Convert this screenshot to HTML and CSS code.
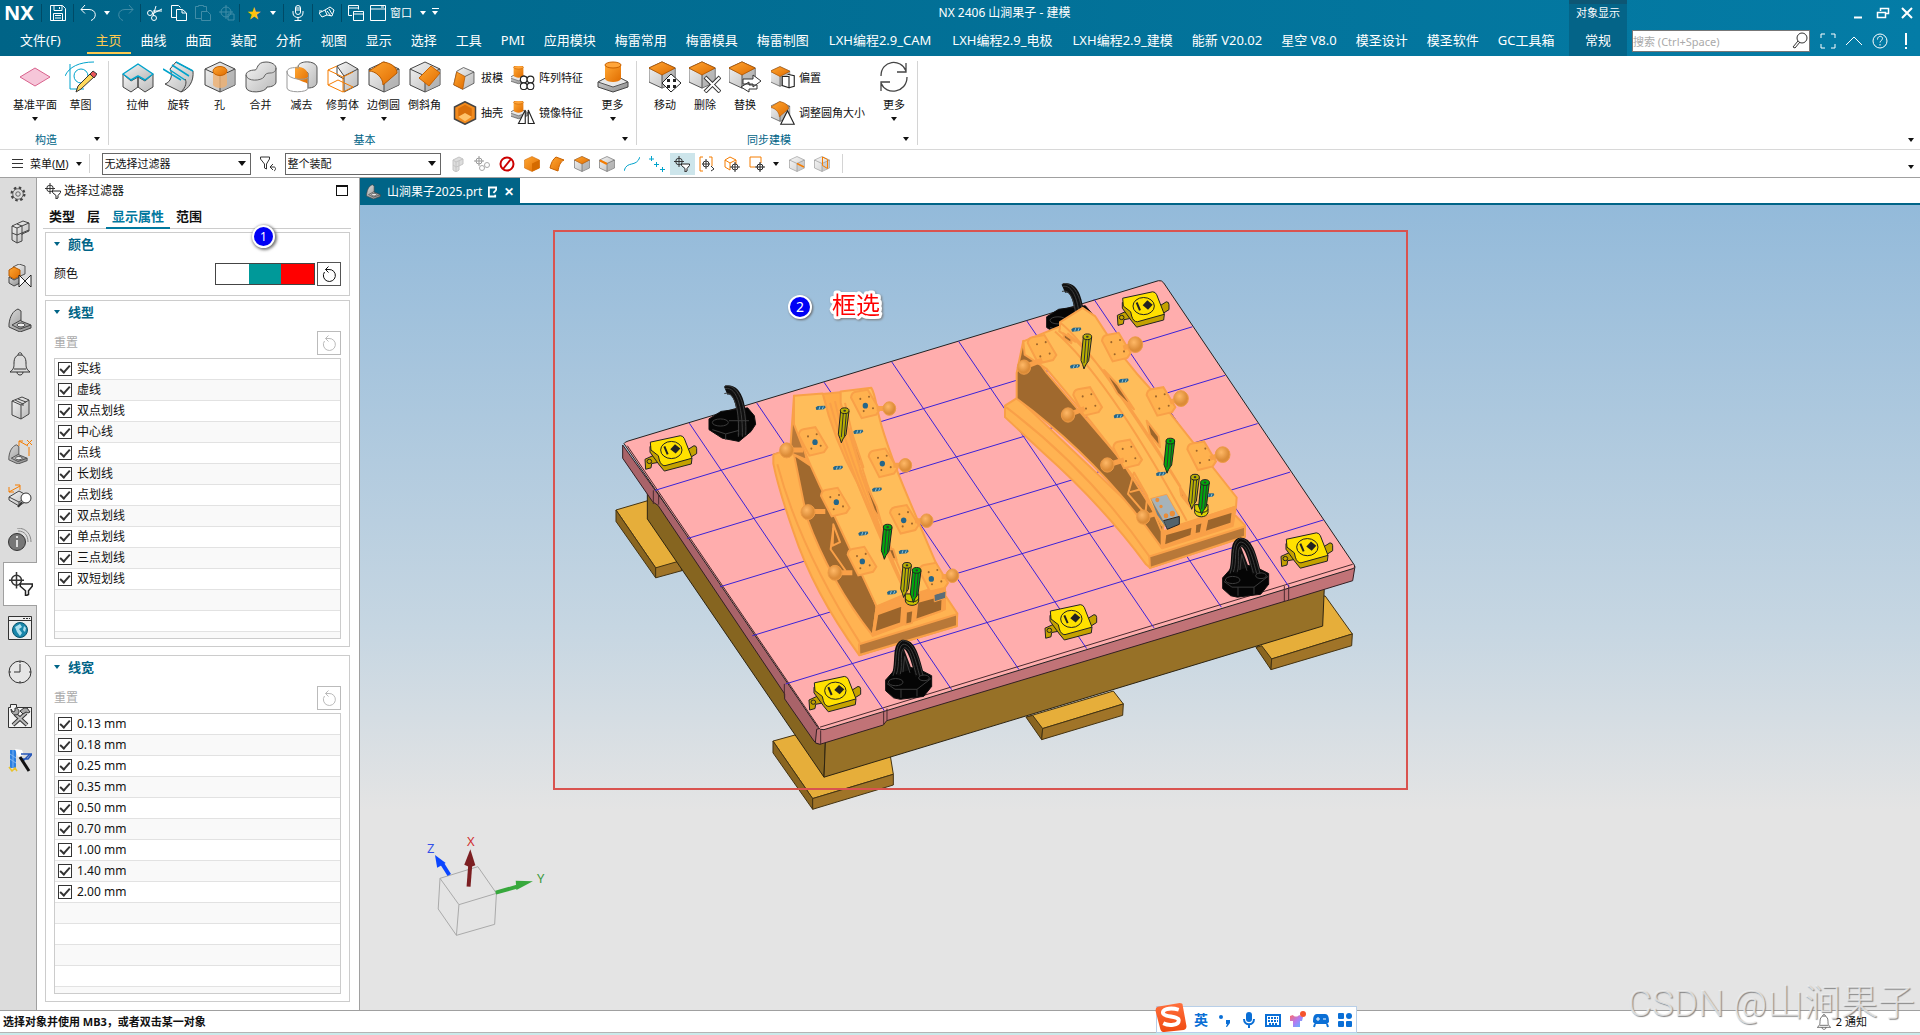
FILE: index.html
```html
<!DOCTYPE html>
<html lang="zh-CN">
<head>
<meta charset="utf-8">
<title>NX 2406 山涧果子 - 建模</title>
<link rel="stylesheet" href="styles.css">
</head>
<body>
<svg class="sprite" aria-hidden="true">
  <defs>
    <linearGradient id="gr" x1="0" y1="0" x2="1" y2="1"><stop offset="0" stop-color="#f4f4f4"/><stop offset="1" stop-color="#b9b9b9"/></linearGradient>
    <linearGradient id="gd" x1="0" y1="0" x2="1" y2="1"><stop offset="0" stop-color="#d8d8d8"/><stop offset="1" stop-color="#8b8b8b"/></linearGradient>
    <linearGradient id="or" x1="0" y1="0" x2="1" y2="1"><stop offset="0" stop-color="#ffa733"/><stop offset="1" stop-color="#e06c00"/></linearGradient>
    <radialGradient id="ball" cx=".4" cy=".35"><stop offset="0" stop-color="#ffb866"/><stop offset="1" stop-color="#dc8c38"/></radialGradient>
    <linearGradient id="shirt" x1="0" y1="0" x2="1" y2="1"><stop offset="0" stop-color="#ff6a6a"/><stop offset=".5" stop-color="#b07cf5"/><stop offset="1" stop-color="#4ac3ff"/></linearGradient>
    <linearGradient id="sogou" x1="0" y1="0" x2="0" y2="1"><stop offset="0" stop-color="#ff6f3c"/><stop offset="1" stop-color="#f04a10"/></linearGradient>
  </defs>

  <symbol id="save" viewBox="0 0 16 16"><path d="M.5.5h12l3 3v12H.5zM4 .5v5h8v-5M9.500 2v2M3.500 15.500v-7h9v7M5 10.500h6M5 13h6"/></symbol>
  <symbol id="undo" viewBox="0 0 16 16"><path d="M5 0L1 4.500l4 4M1 4.500h8c8 0 8 9 2 11"/></symbol>
  <symbol id="redo" viewBox="0 0 16 16"><path d="M11 0l4 4.500-4 4M15 4.500H7c-8 0-8 9-2 11"/></symbol>
  <symbol id="cut" viewBox="0 0 16 16"><path d="M15 4L5 9M9 1L6 11M15 6L6 6"/><circle cx="3" cy="8" r="2.500"/><circle cx="7" cy="13" r="2.500"/></symbol>
  <symbol id="copy" viewBox="0 0 16 16"><path d="M5 12.500H.5V.5h7l2 2M5.500 4.500h6l4 3.500v7.500h-10zM11 4.500V8h4"/></symbol>
  <symbol id="paste" viewBox="0 0 16 16"><path d="M6 13.500H.5v-12h3v-1h5v1h3V6M6.500 6.500h6l3 3v6h-9z"/></symbol>
  <symbol id="aim" viewBox="0 0 16 16"><circle cx="7" cy="7" r="5"/><path d="M7 0v14M0 7h14M9 9h6v6H9z"/></symbol>
  <symbol id="mic" viewBox="0 0 16 16"><rect x="5.500" y=".5" width="5" height="9" rx="2.500"/><path d="M3 6v2c0 6 10 6 10 0V6M8 12.500v3M4.500 15.500h7M6 3h4M6 5h4"/></symbol>
  <symbol id="hand" viewBox="0 0 16 16"><path d="M0 8l6-3 2 5-5 2zM6 5l5-3 4 3-2 6-5-1M8 6l4 5M10 4l3 5M0 6h3"/></symbol>
  <symbol id="wins" viewBox="0 0 16 16"><path d="M4 10.500H.5V.5h10v4M.5 3h10M5.500 6.500h10v9h-10zM5.500 9h10"/></symbol>
  <symbol id="win" viewBox="0 0 16 16"><path d="M.5.500h15v15H.5zM.5 4h15M11 2h3"/></symbol>

  <symbol id="plane" viewBox="0 0 32 32"><path d="M16 7l15 9-15 9L1 16z" fill="#f6c6d9" stroke="#d8638d"/></symbol>
  <symbol id="sketch" viewBox="0 0 32 32"><g fill="none" stroke="#00a3cc"><path d="M5 3v25h14M0 15C4 6 14 1 29 1"/><circle cx="16" cy="15" r="7"/></g><path d="M11 31l2-6 13-13 4 3-14 13z" fill="#ffd95c" stroke="#333"/><path d="M25 13l3-3 4 3-3 4z" fill="#e8565a" stroke="#333"/></symbol>
  <symbol id="extrude" viewBox="0 0 32 32"><g fill="url(#gr)" stroke="#444" stroke-linejoin="round"><path d="M1 13v13l8 5 7-5V16L9 20zM31 13v13l-8 5-7-5V16l7 4z"/><path d="M16 3L1 13l8 6 7-4 7 4 8-6z" stroke="#00a3cc" stroke-width="1.500"/></g></symbol>
  <symbol id="revolve" viewBox="0 0 32 32"><path d="M13 1l17 9c1 10-4 18-12 21L2 23c6-2 8-9 5-15z" fill="url(#gr)" stroke="#444"/><path d="M0 8l18 11M7 9l15 10M9 4l17 11M13 1l17 9" fill="none" stroke="#00a3cc" stroke-width="1.500"/><path d="M18 31c5-5 6-10 4-13" fill="none" stroke="#444"/></symbol>
  <symbol id="box" viewBox="0 0 32 32"><path d="M16 1L1 8v16l15 7 15-7V8z" fill="url(#gr)" stroke="#444" stroke-linejoin="round"/><path d="M31 8v16l-15 7V15z" fill="#aaa" opacity=".6"/><path d="M1 8l15 7 15-7M16 15v16" fill="none" stroke="#444"/></symbol>
  <symbol id="obox" viewBox="0 0 32 32"><use href="#box"/><path d="M16 1L1 8l15 8 15-8z" fill="url(#or)" stroke="#b85a00"/></symbol>
  <symbol id="hole" viewBox="0 0 32 32"><use href="#box"/><path d="M9 11v13c2 4 12 4 14 0V11" fill="#efb071" opacity=".8"/><ellipse cx="16" cy="10" rx="7" ry="4.500" fill="url(#or)" stroke="#c96200"/></symbol>
  <symbol id="unite" viewBox="0 0 32 32"><path d="M1 14c0-3 4-5 9-5 3 0 1-8 11-8 6 0 10 3 10 6v14c0 3-4 5-9 5-1 6-21 7-21 0z" fill="url(#gr)" stroke="#555"/><path d="M1 14c1 7 15 6 18 2 1-3 3-4 6-4 4 0 6-2 6-5" fill="none" stroke="#666"/></symbol>
  <symbol id="subtract" viewBox="0 0 32 32"><path d="M12 6c0-7 19-7 19 1v14c0 4-4 6-9 6V12z" fill="url(#gr)" stroke="#555"/><path d="M9 6c7-1 14 3 13 10v8c0-3-7-3-13-7z" fill="url(#or)"/><path d="M1 10v17c0 5 21 5 21 0V16c-1 4-21 3-21-5 0-4 6-5 12-4" fill="none" stroke="#999"/></symbol>
  <symbol id="trim" viewBox="0 0 32 32"><path d="M10 5l9-4 12 7v16l-14 7V15z" fill="url(#gr)" stroke="#444"/><path d="M10 5v9l7 4M17 15l14-7" fill="none" stroke="#444"/><path d="M1 9l15 7v15L1 24zM1 9l9-4M16 16l10-5M16 31l10-5M1 24l10-5 15 7" fill="none" stroke="#f57c00"/></symbol>
  <symbol id="blend" viewBox="0 0 32 32"><use href="#box"/><path d="M1 10L15 1c8 1 14 5 14 11l-14 12c0-8-8-14-14-14z" fill="url(#or)" stroke="#b85a00"/></symbol>
  <symbol id="chamfer" viewBox="0 0 32 32"><use href="#box"/><path d="M22 5l9 7-11 13-10-8z" fill="url(#or)" stroke="#c96200"/></symbol>
  <symbol id="draft" viewBox="0 0 32 32"><path d="M14 2l14 6v15l-15 8L1 25 5 7z" fill="url(#gr)" stroke="#444"/><path d="M5 8l11 6-3 17L1 25z" fill="url(#or)" stroke="#b85a00"/><path d="M16 14l12-6" stroke="#444"/></symbol>
  <symbol id="shell" viewBox="0 0 32 32"><path d="M16 1L2 8v16l14 7 14-7V8z" fill="#f28a1d" stroke="#444" stroke-width="2"/><path d="M7 10l9-5 9 5v11l-9 5-9-5z" fill="#d96f0a"/><path d="M7 21l9-5 9 5-9 6z" fill="#ffc36a"/></symbol>
  <symbol id="boss" viewBox="0 0 32 32"><path d="M16 14L1 21v5l15 5 15-5v-5z" fill="url(#gd)" stroke="#444"/><path d="M1 21l15 5 15-5-15-8z" fill="#e8e8e8" stroke="#555"/><path d="M8 4v14c2 4 14 4 16 0V4" fill="url(#or)"/><ellipse cx="16" cy="4" rx="8" ry="3" fill="#ffa53a" stroke="#c96200"/></symbol>
  <symbol id="pattern" viewBox="0 0 32 32"><use href="#boss" x="-3" y="-2" width="26" height="27"/><g fill="#fff" stroke="#222" stroke-width="1.500"><circle cx="17" cy="18" r="4.500"/><circle cx="26" cy="18" r="4.500"/><circle cx="17" cy="27" r="4.500"/><circle cx="26" cy="27" r="4.500"/></g></symbol>
  <symbol id="mirror" viewBox="0 0 32 32"><use href="#boss" x="-3" y="-2" width="26" height="27"/><path d="M19 12v18h-9zM23 12v18h8z" fill="#fff" stroke="#222" stroke-width="1.500"/></symbol>
  <symbol id="move" viewBox="0 0 32 32"><use href="#obox" x="-1" y="0" width="28" height="28"/><path d="M22 13l10 9-10 9-9-9z" fill="#fff" stroke="#222"/><path d="M18 18h3v3h-3zM24 18h3v3h-3zM18 24h3v3h-3zM24 24h3v3h-3z" fill="#222"/></symbol>
  <symbol id="delete" viewBox="0 0 32 32"><use href="#obox" x="-1" y="0" width="28" height="28"/><path d="M16 16l15 15M31 16L16 31" stroke="#333" stroke-width="4"/><path d="M16.500 16.500l14 14M30.500 16.500l-14 14" stroke="#fff" stroke-width="2"/></symbol>
  <symbol id="replace" viewBox="0 0 32 32"><use href="#obox" x="-1" y="0" width="28" height="28"/><path d="M14 18h10v-4l8 6-8 6v-3H14zM28 24h-8v-3l-8 5 8 5v-3h8z" fill="#fff" stroke="#333"/></symbol>
  <symbol id="offset" viewBox="0 0 32 32"><use href="#obox" x="-2" y="0" width="28" height="28"/><path d="M15 14h9v15l-9-3zM22 11l9 2v14l-7 2" fill="#fff" stroke="#222" stroke-width="1.500"/></symbol>
  <symbol id="resize" viewBox="0 0 32 32"><use href="#blend" x="-2" y="0" width="28" height="28"/><path d="M22 13l9 18H13z" fill="#fff" stroke="#222" stroke-width="1.500"/></symbol>
  <symbol id="cycle" viewBox="0 0 32 32"><path d="M3 15C3-1 23-3 28 10M28 2v9h-9M29 16c0 16-21 19-26 6M3 30v-9h9" fill="none" stroke="#444" stroke-width="1.300"/></symbol>

  <symbol id="funnel" viewBox="0 0 16 16"><path d="M.5 1h9v2L6.500 8v5l-2-1V8l-4-5zM13 8l-3 3 3 3M10 11h4c2 0 2 3 0 4" fill="none" stroke="#333"/></symbol>
  <symbol id="bars" viewBox="0 0 16 16"><path d="M4 4l6-3 4 2v5l-4 2v4l-3 2-3-2z" fill="#ddd" stroke="#c4c4c4"/><path d="M4 4l3 2 7-3M7 6v10M4 9l3 2 3-1V5" fill="none" stroke="#c4c4c4"/></symbol>
  <symbol id="linkaim" viewBox="0 0 16 16"><path d="M5 0v10M0 5h10" stroke="#999"/><circle cx="5" cy="5" r="3" fill="none" stroke="#999"/><circle cx="8" cy="12" r="2.500" fill="none" stroke="#aaa"/><circle cx="13" cy="9" r="2.500" fill="none" stroke="#aaa"/></symbol>
  <symbol id="stop" viewBox="0 0 16 16"><circle cx="8" cy="8" r="6.500" fill="#fff" stroke="#cc0000" stroke-width="2"/><path d="M12 3L4 13" stroke="#cc0000" stroke-width="2"/></symbol>
  <symbol id="solid" viewBox="0 0 32 32"><path d="M16 1L1 8v16l15 7 15-7V8z" fill="url(#or)" stroke="#c96200"/><path d="M16 15v16l15-7V8z" fill="#d56b00"/></symbol>
  <symbol id="face" viewBox="0 0 16 16"><path d="M7 1l8 3c-4 2-5 6-6 11l-8-3C2 7 4 3 7 1z" fill="url(#or)" stroke="#c96200"/></symbol>
  <symbol id="edge" viewBox="0 0 32 32"><use href="#box"/><path d="M2 9l14 7" stroke="#f57c00" stroke-width="4"/></symbol>
  <symbol id="curve" viewBox="0 0 16 16"><path d="M0 15C3 4 12 12 16 1" fill="none" stroke="#00a3cc"/></symbol>
  <symbol id="points" viewBox="0 0 16 16"><path d="M0 3h5M2.500 0v5M5 8.500h5M7.500 6v5M11 13.500h5M13.500 11v5" stroke="#00a3cc"/></symbol>
  <symbol id="aimfilter" viewBox="0 0 16 16"><circle cx="5" cy="5.500" r="3.300" fill="none" stroke="#333"/><path d="M5 0v11M0 5.500h10" stroke="#333"/><path d="M7.500 8h8v1.500l-2.500 3V15l-2 1v-3.500l-3.500-3z" fill="#fff" stroke="#222"/></symbol>
  <symbol id="bracket" viewBox="0 0 16 16"><path d="M4 1H1v14h3M10 1h3v9" fill="none" stroke="#f57c00"/><circle cx="7" cy="8" r="3" fill="none" stroke="#333"/><path d="M7 3v10M3 8h8M12 10l3 3-3 2" stroke="#333" fill="none"/></symbol>
  <symbol id="boxaim" viewBox="0 0 16 16"><path d="M6 1L1 4v7l5 3M6 1l6 3v5M1 4l5 3 6-3M6 7v7" fill="none" stroke="#f57c00"/><circle cx="11" cy="11" r="3" fill="#fff" stroke="#333"/><path d="M11 6v10M6 11h10" stroke="#333"/></symbol>
  <symbol id="sqaim" viewBox="0 0 16 16"><path d="M6 11H1V1h11v6" fill="none" stroke="#f57c00"/><circle cx="11" cy="11" r="3" fill="#fff" stroke="#222"/><path d="M11 6v10M6 11h10" stroke="#222"/></symbol>
  <symbol id="cubeline" viewBox="0 0 32 32"><use href="#box" opacity=".7"/><path d="M16 15l14 7" stroke="#f57c00" stroke-width="3"/></symbol>
  <symbol id="cubecut" viewBox="0 0 32 32"><use href="#box" opacity=".7"/><path d="M17 2l10 5v18l-10-6z" fill="none" stroke="#f57c00" stroke-width="2"/></symbol>

  <symbol id="gear" viewBox="0 0 24 24"><circle cx="12" cy="12" r="8.500" fill="none" stroke="#444" stroke-width="3" stroke-dasharray="3.300 3.380"/><circle cx="12" cy="12" r="7" fill="#ddd" stroke="#444"/><circle cx="12" cy="12" r="3" fill="none" stroke="#444"/></symbol>
  <symbol id="asm" viewBox="0 0 24 24"><path d="M4 6l11-5 6 2v8l-7 3v7l-5 2-5-3z" fill="url(#gr)" stroke="#444"/><path d="M4 6l5 2 12-5M9 8v15M14 6v9M4 13l5 2 12-5M9 4l5 2" fill="none" stroke="#444"/></symbol>
  <symbol id="constraint" viewBox="0 0 24 24"><path d="M5 3l6-3 6 2v8l-7 3z" fill="url(#gr)" stroke="#555"/><path d="M1 6l5-3 6 3v6l-6 3-5-3z" fill="url(#or)" stroke="#b85a00"/><path d="M1 13l5 3 6-3v6l-6 3-5-3z" fill="url(#gd)" stroke="#444"/><path d="M11 11v12l12-12v12z" fill="#fff" stroke="#222"/></symbol>
  <symbol id="part" viewBox="0 0 24 24"><path d="M1 16C2 8 5 3 10 1l3 2v10l10 4v3l-11 4L1 19z" fill="url(#gd)" stroke="#444"/><path d="M13 12L4 17l8 4 11-4" fill="none" stroke="#444"/><ellipse cx="13" cy="17" rx="4" ry="2" fill="#eee" stroke="#444"/></symbol>
  <symbol id="bell" viewBox="0 0 24 24"><path d="M2 20c4-3 4-5 4-9 0-5 2-8 6-8s6 3 6 8c0 4 0 6 4 9zM10 3c0-3 4-3 4 0M9 20c0 4 6 4 6 0M6 17h12" fill="none" stroke="#333"/></symbol>
  <symbol id="books" viewBox="0 0 24 24"><path d="M4 5l10-4 7 3v14l-8 5-9-4z" fill="url(#gr)" stroke="#444"/><path d="M4 5l9 4v14M7 4l8 4v2M10 3l8 3M13 9l8-5" fill="none" stroke="#444"/></symbol>
  <symbol id="partx" viewBox="0 0 24 24"><use href="#part" y="4" width="20" height="20"/><path d="M11 1l9 5M11 1v5M11 1h4M19 0l5 5M24 0l-5 5M21 7v9" stroke="#f57c00" fill="none"/></symbol>
  <symbol id="inspect" viewBox="0 0 24 24"><path d="M1 13l10-6 9 5v4l-9 6-10-6z" fill="url(#gr)" stroke="#444"/><path d="M1 13l10 5 9-6M11 18v4" fill="none" stroke="#444"/><path d="M1 8l11-6M1 3v5h5M12 6V1H7" fill="none" stroke="#f57c00"/><circle cx="18" cy="14" r="5" fill="#fff" stroke="#333"/><path d="M14 18l-4 5" stroke="#333" stroke-width="2"/></symbol>
  <symbol id="info" viewBox="0 0 24 24"><circle cx="9" cy="14" r="8.500" fill="#777" stroke="#333"/><path d="M9 12v7M9 8v2" stroke="#fff" stroke-width="1.500"/><path d="M10 3c7 0 10 5 10 11M9 0c10 0 14 7 14 14" fill="none" stroke="#888"/></symbol>
  <symbol id="web" viewBox="0 0 24 24"><path d="M.5.500h23v23H.5zM.5 4.500h23" fill="#eee" stroke="#333"/><path d="M15 2.500h7" stroke="#333" stroke-dasharray="2 1"/><circle cx="12" cy="14" r="7.500" fill="#1a87ab" stroke="#06526b"/><path d="M7 11l5-3 2 3-3 2 3 4-2 3-3-4zM16 10l2 2-1 4-2-2z" fill="#aee0ee"/></symbol>
  <symbol id="clock" viewBox="0 0 24 24"><circle cx="12" cy="12" r="11" fill="#e6e6e6" stroke="#333"/><path d="M12 4v8H6M12 1v2M12 21v2M1 12h2M21 12h2" fill="none" stroke="#333"/></symbol>
  <symbol id="tools" viewBox="0 0 24 24"><path d="M.5 3.500h2v-3h6v3h15v20H.5z" fill="#f4f4f4" stroke="#333"/><path d="M5 21L18 9M7 10l12 11" stroke="#333" stroke-width="4"/><path d="M5 21L18 9M7 10l12 11" stroke="#bbb" stroke-width="2"/><path d="M12 7l4-3h3l3 4-2 1-2-1-3 2zM3 5l2 3 2-1V4c4 0 5 4 3 6s-7 1-7-5z" fill="#aaa" stroke="#333"/></symbol>
  <symbol id="wizard" viewBox="0 0 24 24"><path d="M2 2h6v18H2z" fill="#2a7fe0"/><path d="M5 2v18M2 6l6 4M2 11l6 4" stroke="#7fb6f2"/><path d="M7 1l7 1 2 5-6 2z" fill="#fff"/><path d="M13 6h11l-4 5h-6M14 14l8-8" stroke="#2455b8" stroke-width="1.500" fill="none"/><path d="M12 9l9 14" stroke="#111" stroke-width="3"/><path d="M1 19l3 4 3-3 2 3" stroke="#e8c22c" fill="none" stroke-width="1.500"/></symbol>
  <symbol id="reset" viewBox="0 0 16 16"><path d="M3.500 6A6 6 0 1 0 8 3.500H4.500M7.500 .5l-3 3 3 3" fill="none" stroke="currentColor"/></symbol>
</svg>

<header class="appbar">
  <div class="appbar-main">
    <div class="titlebar">
      <strong class="brand">NX</strong><i class="sep"></i>
      <button class="qa save" aria-label="保存"><svg><use href="#save"/></svg></button><i class="sep"></i>
      <button class="qa mid" aria-label="撤销"><svg><use href="#undo"/></svg></button>
      <button class="qa drop" aria-label="撤销列表"><i class="caret"></i></button>
      <button class="qa mid dim" aria-label="重做"><svg><use href="#redo"/></svg></button><i class="sep"></i>
      <button class="qa cut" aria-label="剪切"><svg><use href="#cut"/></svg></button>
      <button class="qa" aria-label="复制"><svg><use href="#copy"/></svg></button>
      <button class="qa dim" aria-label="粘贴"><svg><use href="#paste"/></svg></button>
      <button class="qa dim" aria-label="定位"><svg><use href="#aim"/></svg></button><i class="sep"></i>
      <button class="qa mid star" aria-label="收藏">★</button>
      <button class="qa drop" aria-label="收藏列表"><i class="caret"></i></button><i class="sep push"></i>
      <button class="qa mid" aria-label="语音"><svg><use href="#mic"/></svg></button><i class="sep"></i>
      <button class="qa mid" aria-label="触控"><svg><use href="#hand"/></svg></button><i class="sep"></i>
      <button class="qa mid" aria-label="切换窗口"><svg><use href="#wins"/></svg></button>
      <button class="qa window"><svg><use href="#win"/></svg>窗口<i class="caret"></i></button>
      <button class="qa drop" aria-label="更多命令"><i class="caret lined"></i></button>
      <h1>NX 2406 山涧果子 - 建模</h1>
    </div>
    <nav class="tabs">
      <a href="#" class="file">文件(F)</a><a href="#" class="on">主页</a><a href="#">曲线</a><a href="#">曲面</a><a href="#">装配</a><a href="#">分析</a><a href="#">视图</a><a href="#">显示</a><a href="#">选择</a><a href="#">工具</a><a href="#">PMI</a><a href="#">应用模块</a><a href="#">梅雷常用</a><a href="#">梅雷模具</a><a href="#">梅雷制图</a><a href="#" class="wide">LXH编程2.9_CAM</a><a href="#" class="wide">LXH编程2.9_电极</a><a href="#">LXH编程2.9_建模</a><a href="#">能新 V20.02</a><a href="#">星空 V8.0</a><a href="#">模圣设计</a><a href="#">模圣软件</a><a href="#">GC工具箱</a>
    </nav>
  </div>
  <div class="context"><span>对象显示</span><a href="#">常规</a></div>
  <div class="appbar-end">
    <div class="winctl">
      <button aria-label="最小化"><svg viewBox="0 0 14 14"><path d="M2 11.500h8" stroke-width="2"/></svg></button>
      <button aria-label="还原"><svg viewBox="0 0 14 14"><path d="M4.500 5V2.500h8v5H10M1.500 6.500h8v5h-8zM4 2.500h9M1 6.500h9" stroke-width="1.500"/></svg></button>
      <button aria-label="关闭"><svg viewBox="0 0 14 14"><path d="M2 2l10 10M12 2L2 12" stroke-width="2"/></svg></button>
    </div>
    <div class="searchrow">
      <div class="search"><input type="text" placeholder="搜索 (Ctrl+Space)" aria-label="搜索"><svg viewBox="0 0 18 18"><circle cx="11" cy="6" r="5"/><path d="M7 9l-5 6 2 1 5-6"/></svg></div>
      <button aria-label="全屏"><svg viewBox="0 0 16 16"><path d="M1 5V1h4M11 1h4v4M15 11v4h-4M5 15H1v-4"/></svg></button>
      <button aria-label="最小化功能区"><svg viewBox="0 0 16 16"><path d="M0 12l8-8 8 8"/></svg></button>
      <button aria-label="帮助"><svg viewBox="0 0 16 16"><circle cx="8" cy="8" r="7"/><path d="M5.500 6.500c0-4 5-4 5-1 0 2-2.500 2-2.500 4M8 11v1.500"/></svg></button>
      <button aria-label="提示"><svg viewBox="0 0 16 16"><path d="M8 0v12M8 14v2" stroke-width="2"/></svg></button>
    </div>
  </div>
</header>

<section class="ribbon">
  <div class="group">
    <div class="cmds first">
      <button class="big wide"><svg><use href="#plane"/></svg>基准平面<i class="caret"></i></button>
      <button class="big"><svg><use href="#sketch"/></svg>草图</button>
    </div>
    <h2>构造</h2><i class="caret launch"></i>
  </div>
  <div class="group">
    <div class="cmds">
      <button class="big"><svg><use href="#extrude"/></svg>拉伸</button>
      <button class="big"><svg><use href="#revolve"/></svg>旋转</button>
      <button class="big"><svg><use href="#hole"/></svg>孔</button>
      <button class="big"><svg><use href="#unite"/></svg>合并</button>
      <button class="big"><svg><use href="#subtract"/></svg>减去</button>
      <button class="big"><svg><use href="#trim"/></svg>修剪体<i class="caret"></i></button>
      <button class="big"><svg><use href="#blend"/></svg>边倒圆<i class="caret"></i></button>
      <button class="big"><svg><use href="#chamfer"/></svg>倒斜角</button>
      <div class="stack">
        <button><svg><use href="#draft"/></svg>拔模</button>
        <button><svg><use href="#shell"/></svg>抽壳</button>
      </div>
      <div class="stack">
        <button><svg><use href="#pattern"/></svg>阵列特征</button>
        <button><svg><use href="#mirror"/></svg>镜像特征</button>
      </div>
      <button class="big more"><svg><use href="#boss"/></svg>更多<i class="caret"></i></button>
    </div>
    <h2>基本</h2><i class="caret launch"></i>
  </div>
  <div class="group tight">
    <div class="cmds">
      <button class="big"><svg><use href="#move"/></svg>移动</button>
      <button class="big"><svg><use href="#delete"/></svg>删除</button>
      <button class="big"><svg><use href="#replace"/></svg>替换</button>
      <div class="stack">
        <button><svg><use href="#offset"/></svg>偏置</button>
        <button><svg><use href="#resize"/></svg>调整圆角大小</button>
      </div>
      <button class="big more"><svg><use href="#cycle"/></svg>更多<i class="caret"></i></button>
    </div>
    <h2>同步建模</h2><i class="caret launch"></i>
  </div>
  <i class="caret endmark"></i>
</section>

<section class="selbar">
  <button class="menu"><i class="lines"></i><span>菜单(<u>M</u>)</span><i class="caret"></i></button>
  <i class="rule"></i>
  <label class="combo type"><select aria-label="类型过滤器"><option>无选择过滤器</option></select><i class="caret"></i></label>
  <button class="filter" aria-label="重置过滤器"><svg><use href="#funnel"/></svg></button>
  <label class="combo scope"><select aria-label="选择范围"><option>整个装配</option></select><i class="caret"></i></label>
  <div class="tools">
    <button aria-label="装配体"><svg><use href="#bars"/></svg></button><button aria-label="关联"><svg><use href="#linkaim"/></svg></button><button aria-label="无"><svg><use href="#stop"/></svg></button><button aria-label="实体"><svg><use href="#solid"/></svg></button><button aria-label="面"><svg><use href="#face"/></svg></button><button aria-label="体面"><svg><use href="#obox"/></svg></button><button aria-label="边"><svg><use href="#edge"/></svg></button><button aria-label="曲线"><svg><use href="#curve"/></svg></button><button aria-label="点"><svg><use href="#points"/></svg></button><button class="on" aria-label="选择过滤器"><svg><use href="#aimfilter"/></svg></button><button aria-label="恢复"><svg><use href="#bracket"/></svg></button><button aria-label="部件"><svg><use href="#boxaim"/></svg></button><button aria-label="矩形"><svg><use href="#sqaim"/></svg></button><button class="thin" aria-label="方式"><i class="caret"></i></button><button aria-label="高亮边"><svg><use href="#cubeline"/></svg></button><button aria-label="剖切"><svg><use href="#cubecut"/></svg></button>
  </div>
  <i class="rule"></i>
  <i class="caret endmark"></i>
</section>

<main class="workspace">
  <nav class="rail">
    <button class="top" aria-label="设置"><svg><use href="#gear"/></svg></button>
    <button aria-label="装配导航器"><svg><use href="#asm"/></svg></button>
    <button aria-label="约束导航器"><svg><use href="#constraint"/></svg></button>
    <button aria-label="部件导航器"><svg><use href="#part"/></svg></button>
    <button aria-label="通知"><svg><use href="#bell"/></svg></button>
    <button aria-label="重用库"><svg><use href="#books"/></svg></button>
    <button aria-label="PMI"><svg><use href="#partx"/></svg></button>
    <button aria-label="检查"><svg><use href="#inspect"/></svg></button>
    <button aria-label="信息"><svg><use href="#info"/></svg></button>
    <button class="on" aria-label="选择过滤器"><svg><use href="#aimfilter"/></svg></button>
    <button aria-label="浏览器"><svg><use href="#web"/></svg></button>
    <button aria-label="历史"><svg><use href="#clock"/></svg></button>
    <button aria-label="工具箱"><svg><use href="#tools"/></svg></button>
    <button aria-label="向导"><svg><use href="#wizard"/></svg></button>
  </nav>

  <aside class="panel">
    <div class="panel-title"><svg><use href="#aimfilter"/></svg><h2>选择过滤器</h2><button aria-label="最大化"></button></div>
    <nav class="panel-tabs"><a href="#">类型</a><a href="#">层</a><a href="#" class="on">显示属性</a><a href="#">范围</a></nav>

    <section class="card color">
      <h3><i class="caret"></i>颜色</h3>
      <div class="field"><span>颜色</span><div class="swatches"><b class="white"></b><b class="teal"></b><b class="red"></b></div><button class="reset" aria-label="重置颜色"><svg><use href="#reset"/></svg></button></div>
    </section>

    <section class="card style">
      <h3><i class="caret"></i>线型</h3>
      <div class="field off"><span>重置</span><button class="reset" disabled aria-label="重置线型"><svg><use href="#reset"/></svg></button></div>
      <ul>
        <li><label><input type="checkbox" checked>实线</label></li>
        <li><label><input type="checkbox" checked>虚线</label></li>
        <li><label><input type="checkbox" checked>双点划线</label></li>
        <li><label><input type="checkbox" checked>中心线</label></li>
        <li><label><input type="checkbox" checked>点线</label></li>
        <li><label><input type="checkbox" checked>长划线</label></li>
        <li><label><input type="checkbox" checked>点划线</label></li>
        <li><label><input type="checkbox" checked>双点划线</label></li>
        <li><label><input type="checkbox" checked>单点划线</label></li>
        <li><label><input type="checkbox" checked>三点划线</label></li>
        <li><label><input type="checkbox" checked>双短划线</label></li>
        <li></li><li></li><li class="part"></li>
      </ul>
    </section>

    <section class="card width">
      <h3><i class="caret"></i>线宽</h3>
      <div class="field off"><span>重置</span><button class="reset" disabled aria-label="重置线宽"><svg><use href="#reset"/></svg></button></div>
      <ul>
        <li><label><input type="checkbox" checked>0.13 mm</label></li>
        <li><label><input type="checkbox" checked>0.18 mm</label></li>
        <li><label><input type="checkbox" checked>0.25 mm</label></li>
        <li><label><input type="checkbox" checked>0.35 mm</label></li>
        <li><label><input type="checkbox" checked>0.50 mm</label></li>
        <li><label><input type="checkbox" checked>0.70 mm</label></li>
        <li><label><input type="checkbox" checked>1.00 mm</label></li>
        <li><label><input type="checkbox" checked>1.40 mm</label></li>
        <li><label><input type="checkbox" checked>2.00 mm</label></li>
        <li></li><li></li><li></li><li></li><li class="part"></li>
      </ul>
    </section>
    <span class="callout">1</span>
  </aside>

  <section class="stage">
    <div class="docs"><div class="doc"><svg class="docicon"><use href="#part"/></svg><span>山涧果子2025.prt</span><svg class="edit" viewBox="0 0 10 12"><path d="M9 4V1H1v10h7V9M9 4L6 7"/></svg><button aria-label="关闭">✕</button></div></div>
    <svg class="view" viewBox="360 205 1560 805" preserveAspectRatio="xMidYMid meet">
      <defs class="cad">
        <g id="magnet">
          <path class="ydark" d="M-78 18l28-12 16 20-24 4-2 12-16 4zM45 -6l24-14q8 0 8 8v14l-24 14z"/>
          <path class="ydark" d="M-63 -18v16l28 36 15 17 81-20 2-16z"/>
          <path class="ylw" d="M-62 -30L28 -48q8 0 12 8L63 15-18 36q-12 0-17-16L-38 8-60 -8z"/>
          <ellipse class="noline" cx="1" cy="-8" rx="32" ry="24"/>
          <path d="M12 -24l16 12-14 14-16-12z" fill="#222"/><path d="M-20 -18l10 22" stroke="#222" stroke-width="2"/>
          <ellipse class="noline" cx="-65" cy="24" rx="7" ry="6"/>
        </g>
        <g id="hookF">
          <path class="blk" d="M-70 -8v30l24 20 20 4 70-8 24-28V-20L30 -38-30 -50z"/>
          <path d="M-38 -24C-26 -50-38 -100-18 -108 10 -110 20 -60 32 -20" fill="none" stroke="#0c0c0c" stroke-width="9"/>
          <path d="M-22 -30l8-50 18 44" fill="#111" stroke="#111" stroke-width="3"/>
          <path d="M-48 -20C-34 -50-46 -106-20 -118 16 -120 30 -60 42 -20M-38 -24C-26 -50-38 -100-18 -108 10 -110 20 -60 32 -20M-26 -25C-18 -50-30 -90-14 -98 4 -100 10 -60 22 -22M-18 -30l5-44 16 46" class="grayline"/>
          <ellipse class="grayline" cx="-40" cy="-2" rx="22" ry="10"/><ellipse class="grayline" cx="45" cy="-14" rx="16" ry="8"/><path class="grayline" d="M-66 2l24 16h66l42-30M-24 18v24M24 18v20"/>
        </g>
        <g id="hookB">
          <path class="blk" d="M-70 -5v30l40 24 50 9 36-28 14-20-4-24-20-22-80 10z"/>
          <path d="M-20 -84C20 -100 34 -20 28 42" fill="none" stroke="#101010" stroke-width="9"/>
          <path class="grayline" d="M-22 -98C26 -104 44 -20 40 40M-24 -76C10 -86 22 -20 18 45M-22 -90C18 -98 32 -20 30 45"/>
          <ellipse class="grayline" cx="-36" cy="5" rx="24" ry="10"/><path class="grayline" d="M-60 25l40 12 40-10M-10 0h60M-20 37v16"/>
        </g>
        <g id="pin"><path d="M-12 0l-7 66 5 12 4 12 5-11 9-12 9-66z" fill="currentColor" stroke="#222"/><path d="M-4 6l-6 68M5 6l-6 66" stroke="#333"/><ellipse rx="13" ry="8" fill="currentColor" stroke="#222"/><ellipse rx="4" ry="3" fill="#333"/></g>
        <g id="pad"><path d="M-42 -20q2-14 14-16l36-6 36 56-10 14-44 10z" fill="#ffb24f" stroke="#f9a048" stroke-width="2"/><circle cx="-14" cy="-16" r="3" fill="#9c652b"/><circle cx="12" cy="-22" r="3" fill="#9c652b"/><circle cx="-4" cy="18" r="3" fill="#9c652b"/><circle cx="24" cy="10" r="3" fill="#9c652b"/></g>
        <g id="mark"><path d="M-15 -2l6-4 22-1 2 5-6 5-22 2z" fill="#24668a"/><path d="M-5 4l3-9M5 3l3-8" stroke="#8fc4d6"/></g>
      </defs>
      <g class="cad" transform="translate(600 260) scale(.333333 .357143)">
        <!-- feet -->
        <g class="foot"><path d="M48 700l102-28 95 198-78 -8z"/><path class="fs" d="M48 700v32l119 158v-28z"/><path class="ff" d="M167 862l78-21v29l-78 20z"/>
        <path d="M519 1347l330-85 31 178-242 68z"/><path class="fs" d="M519 1347v33l119 158v-30z"/><path class="ff" d="M638 1508l242-68v30l-242 68z"/>
        <path d="M1278 1280l262-73 30 36-242 69z"/><path class="fs" d="M1278 1280l20-5 30 37-3 31z"/><path class="ff" d="M1328 1312l242-69-2 32-243 68z"/>
        <path d="M1968 1085l207-145 82 107-242 70z"/><path class="fs" d="M1968 1085l17-5 30 37-2 30z"/><path class="ff" d="M2015 1117l242-70-2 33-242 67z"/></g>
        <path d="M142 640v85l530 723 5-120z" fill="#866520" stroke="#2d2412"/>
        <path d="M677 1330l-5 118 1496-423 5-110z" fill="#977127" stroke="#2d2412"/>
        <!-- plate -->
        <path d="M68 518v37l90 122 16 10 380 528v14l88 118q8 10 20 8l12-50z" fill="#a96369" stroke="#332024"/>
        <path d="M650 1314l-4 38 14 4 190-54 10-12 1200-336 8-2 190-54 7-40z" fill="#c17377" stroke="#332024"/>
        <path d="M72 514q2-4 12-7L1675 58q10-2 16 6l572 790q4 8-4 10L672 1315q-12 2-20-8z" fill="#ffadad" stroke="#222"/>
        <path d="M660 1308L2258 852M82 520l574 788M160 645v38M176 655v30M553 1187v34M851 1262v38M861 1256v34M2053 913v42M2066 910v42M662 1317v38" class="edge"/>
        <path class="grid" d="M268 457l585 805M470 400l585 803M672 342l585 805M875 285l585 803M1076 228l586 802M1280 170l584 802M1482 110l585 805M165 645L1777 187M262 780L1875 323M360 915L1973 458M457 1052L2070 594M557 1187L2170 728"/>

        <use href="#hookB" x="397" y="450"/><use href="#hookB" x="1410" y="164"/>
        <use href="#magnet" x="213" y="540"/><use href="#magnet" x="1630" y="137"/><use href="#magnet" x="705" y="1214"/><use href="#magnet" x="2121" y="812"/><use href="#magnet" x="1413" y="1013"/>

        <!-- left fixture -->
        <g class="fx">
          <path d="M520 545l60-20 460 420 32 45-2 35-292 82Q640 930 580 760 535 640 520 570z"/>
          <path d="M777 1076l294-84v33l-293 81z" fill="#b87838"/>
          <path d="M532 572Q600 810 780 1072" fill="none"/>
          <path d="M582 545l80 50 168 375-12 82Q690 900 620 720z" fill="#a0692e"/>
          <path d="M582 380l-12 160 50 20z" fill="#b87838"/>
          <path d="M668 375l52-5 240 480-20 80-110 40z" fill="#ffab48"/>
          <path d="M582 380l86-6Q700 500 770 620q70 150 155 312l-95 38Q740 790 690 690 630 580 582 460z" fill="#ffbd5a"/>
          <path d="M722 368l92-10q8 12 16 50 18 90 100 270l105 230-105 42Q830 760 722 400z" fill="#ffbd5a"/>
          <path d="M735 400Q790 640 925 920M690 400q60 200 220 520M705 395q30 140 200 510" fill="none"/>
          <path d="M830 970l205-62v70l-217 74z" fill="#f9a048"/>
          <path d="M832 992l75-25-4 50-80 26zM918 985l22-5-4 36-20 5zM952 958l76-20-2 44-80 26zM745 470l20 40 25 70-14-20zM780 590l50 100 12 40-20-30zM866 810l14 0 10 30-12-4zM700 740l20 50-22 10z" fill="#9c652b" stroke="none"/>
          <path d="M700 750l-8 60 45 60" fill="none"/>
        </g>
        <g><use href="#pad" x="795" y="405"/><use href="#pad" x="848" y="570"/><use href="#pad" x="912" y="728"/><use href="#pad" x="1000" y="890"/><use href="#pad" x="638" y="510"/><use href="#pad" x="705" y="680"/><use href="#pad" x="785" y="845"/></g>
        <g class="arm"><path d="M830 416h38M880 575h36M945 730h35M1025 886h32M560 532h50M624 704h52M705 876h52"/></g>
        <g class="balls"><circle cx="868" cy="416" r="19"/><circle cx="916" cy="575" r="19"/><circle cx="980" cy="730" r="19"/><circle cx="1057" cy="884" r="19"/><circle cx="560" cy="533" r="21"/><circle cx="624" cy="706" r="21"/><circle cx="705" cy="876" r="21"/></g>
        <g><use href="#mark" x="662" y="415"/><use href="#mark" x="775" y="482"/><use href="#mark" x="714" y="583"/><use href="#mark" x="831" y="644"/><use href="#mark" x="790" y="767"/><use href="#mark" x="911" y="818"/><use href="#mark" x="876" y="932"/></g>
        <g class="dots"><circle cx="796" cy="408" r="8"/><circle cx="645" cy="510" r="8"/><circle cx="847" cy="570" r="8"/><circle cx="709" cy="678" r="8"/><circle cx="911" cy="729" r="8"/><circle cx="787" cy="844" r="8"/><circle cx="994" cy="893" r="8"/></g>
        <path d="M1002 937l36-10-1 20-34 10z" fill="#5b6d78" stroke="#f9a048"/>
        <path d="M916 935v20c4 16 36 16 40 0v-20z" fill="#c9c400" stroke="#222"/><path d="M916 948c4 12 36 12 40 0" fill="none" stroke="#222"/>
        <use href="#pin" x="734" y="422" class="py"/><use href="#pin" x="863" y="748" class="pg"/><use href="#pin" x="921" y="855" class="py"/><use href="#pin" x="950" y="869" class="pg"/>

        <!-- right fixture -->
        <g transform="translate(1140 0)">
          <g class="fx">
            <path d="M75 408l37-22 440 390 215-60 28 27v32L510 862l-12-10Q370 690 190 540L75 440z"/>
            <path d="M508 830l287-84v28l-285 88z" fill="#b87838"/>
            <path d="M78 412Q330 590 508 830" fill="none"/>
            <path d="M130 226l-20 90v72Q360 560 545 806l5-60-130-190-220-240z" fill="#a0692e"/>
            <path d="M130 228l110-42v-12l68-40 38 24Q420 270 520 370l250 295-2 26-168 50-55 2Q500 650 430 570L330 450 200 305l-66-40z" fill="#ffbd5a"/>
            <path d="M240 175q100 70 400 520M262 205q120 90 340 430M225 200q160 130 395 530M240 188l-2 12 50 30" fill="none"/>
            <path d="M548 760l220-70-10 55-212 62z" fill="#f9a048"/>
            <path d="M556 768l82-22-4 26-82 28zM646 740l22-6-6 30-18 4zM682 726l76-22-4 34-80 24zM372 308l40 40 50 70-50-44zM500 450l36 44 4 30-30-34zM250 205l24 16v12l-22-14zM600 640l30 50-26-30z" fill="#9c652b" stroke="none"/>
            <path d="M462 595l-18 60 52 56 6-50zM500 660l45 100v46" fill="none"/>
            <path d="M450 650l32-8" stroke="#e8eef0" stroke-width="2"/>
          </g>
          <g><use href="#pad" x="185" y="252"/><use href="#pad" x="322" y="398"/><use href="#pad" x="442" y="545"/><use href="#pad" x="408" y="246"/><use href="#pad" x="542" y="398"/><use href="#pad" x="664" y="550"/></g>
          <g class="arm"><path d="M132 300l55-20M264 434l50-18M382 574l50-14M490 720l38-10M430 246l36-9M570 398l33-10M690 555l38-10"/></g>
          <g class="balls"><circle cx="466" cy="237" r="22"/><circle cx="603" cy="388" r="22"/><circle cx="728" cy="545" r="22"/><circle cx="132" cy="300" r="20"/><circle cx="264" cy="434" r="20"/><circle cx="382" cy="574" r="20"/><circle cx="490" cy="720" r="20"/></g>
          <g><use href="#mark" x="289" y="196"/><use href="#mark" x="285" y="299"/><use href="#mark" x="431" y="339"/><use href="#mark" x="416" y="438"/><use href="#mark" x="543" y="600"/><use href="#mark" x="688" y="660"/></g>
          <path d="M512 668l48-12 38 62-48 12z" fill="#a5b3bb" stroke="#f9a048"/><path d="M550 730l48-12v22l-36 14z" fill="#53636c" stroke="#222"/><path d="M512 668l38 62 12 24-30-40z" fill="#6d7e88"/>
          <g fill="#e98d39"><circle cx="532" cy="672" r="6"/><circle cx="543" cy="690" r="5"/><circle cx="558" cy="716" r="7"/><circle cx="577" cy="710" r="8"/></g>
          <path d="M644 685v22c4 16 36 16 40 0v-22z" fill="#d9d200" stroke="#222"/><path d="M644 698c4 12 36 12 40 0" fill="none" stroke="#222"/>
          <use href="#pin" x="322" y="215" class="py"/><use href="#pin" x="571" y="507" class="pg"/><use href="#pin" x="645" y="608" class="py"/><use href="#pin" x="675" y="623" class="pg"/>
        </g>
        <use href="#hookF" x="927" y="1184"/><use href="#hookF" x="1938" y="898"/>
      </g>

      <!-- view triad -->
      <g class="cad" transform="translate(0 590) scale(.357143 .333333)">
        <path d="M1232 865l106-35 52 80-105 34zM1232 865l-5 92 51 79 7-92M1278 1036l107-33 5-93" fill="none" stroke="#aaa"/>
        <path d="M1312 890l5-70" stroke="#7c1f22" stroke-width="4"/><path d="M1317 778l14 48-15 6-16-8z" fill="#7c1f22"/>
        <path d="M1388 908l60-18" stroke="#37a83c" stroke-width="4"/><path d="M1492 874l-48 -2 2 28z" fill="#37a83c"/>
        <path d="M1258 855l-20-34" stroke="#0b46ff" stroke-width="4"/><path d="M1218 795l6 38 24-14z" fill="#0b46ff"/>
      </g>
      <g class="axis"><text x="427" y="853" fill="#3350e8">Z</text><text x="467" y="846" fill="#d03030">X</text><text x="537" y="883" fill="#3d9a3f">Y</text></g>

      <path d="M554 231h853v558H554z" fill="none" stroke="#d9534f" stroke-width="2"/>
      <g class="badge"><circle cx="800" cy="307" r="11"/><text x="800" y="312">2</text></g>
      <text class="note" x="832" y="314">框选</text>
    </svg>
  </section>
</main>

<footer class="status">
  <strong>选择对象并使用 MB3，或者双击某一对象</strong>
  <button class="notice"><svg><use href="#bell"/></svg>2 通知</button>
  <div class="ime">
    <svg class="logo" viewBox="0 0 32 32"><path d="M2 5L25 1q3 0 3 2l4 22q0 3-3 4L9 31q-3 0-4-3L0 9q0-3 2-4z" fill="url(#sogou)"/><path d="M24 8C14 5 6 8 8 12s16 2 16 7-10 6-16 3" fill="none" stroke="#fff" stroke-width="4"/></svg>
    <button>英</button>
    <button aria-label="标点"><svg viewBox="0 0 16 16"><circle cx="4" cy="5" r="2"/><path d="M9 8h4v3l-3 4H9l1-3H9z"/></svg></button>
    <button aria-label="语音"><svg viewBox="0 0 16 16"><rect x="5" y="0" width="6" height="10" rx="3"/><path d="M3 7c0 7 10 7 10 0M8 12v4" fill="none" stroke="#0a6fd6" stroke-width="2"/></svg></button>
    <button aria-label="键盘"><svg viewBox="0 0 16 16"><path d="M1 3h14v11H1z" fill="none" stroke="#0a6fd6" stroke-width="2"/><path d="M3 6h10M3 9h10M4 12h8" stroke="#0a6fd6" stroke-width="2" stroke-dasharray="2 1"/></svg></button>
    <button aria-label="皮肤"><svg viewBox="0 0 16 16"><path d="M1 4l3-1c1 2 5 2 6 0l4 2-1 4h-2v6H4V9H1z" fill="url(#shirt)"/><circle cx="14" cy="2" r="3" fill="#f5532d"/></svg></button>
    <button aria-label="游戏"><svg viewBox="0 0 16 16"><path d="M4 2h8c3 0 4 3 4 8l-2 2H2l-2-2c0-5 1-8 4-8z"/><path d="M3 7h4M5 5v4M10 7h3" stroke="#fff"/><path d="M2 12l-1 3M14 12l1 3" stroke="#0a6fd6" stroke-width="2"/></svg></button>
    <button aria-label="工具箱"><svg viewBox="0 0 16 16"><rect x="1" y="1" width="6" height="6" rx="1"/><circle cx="12" cy="4" r="3"/><rect x="1" y="9" width="6" height="6" rx="1"/><rect x="9" y="9" width="6" height="6" rx="1"/></svg></button>
  </div>
  <span class="credit">CSDN @山涧果子</span>
</footer>
</body>
</html>
```
FILE: styles.css
```css
* { box-sizing: border-box; }
body {
  margin: 0;
  min-height: 100vh;
  display: flex;
  flex-direction: column;
  font: 12px/14px "Noto Sans", "Noto Sans CJK SC", sans-serif;
  color: #111;
  background: #fff;
  border-bottom: 2px solid #c9eaea;
}
h1, h2, h3, ul { margin: 0; padding: 0; font-size: inherit; font-weight: 400; list-style: none; }
button { display: flex; align-items: center; justify-content: center; padding: 0; border: 0; background: none; font: inherit; color: inherit; flex: none; }
a { color: inherit; text-decoration: none; }
svg { flex: none; overflow: visible; }
.sprite { position: absolute; width: 0; height: 0; }
.caret { flex: none; width: 0; height: 0; border: 3px solid transparent; border-top: 4px solid currentColor; border-bottom: 0; }

/* application bar */
.appbar { display: flex; height: 56px; color: #fff; background: linear-gradient(90deg, #006487, #047ca6); }
.appbar-main { flex: 1; min-width: 0; }
.titlebar { display: flex; align-items: center; height: 27px; padding-bottom: 2px; }
.brand { width: 41px; padding-left: 4px; font: bold 20px/24px "Noto Sans", sans-serif; }
.sep { flex: none; width: 1px; height: 18px; background: #004a66; }
.sep.push { margin-left: 5px; }
.qa { width: 24px; height: 24px; }
.qa svg { width: 16px; height: 16px; fill: none; stroke: #fff; }
.qa.save { width: 31px; }
.qa.mid { width: 28px; }
.qa.cut { margin-left: 2px; }
.qa.drop { width: 10px; }
.qa.dim svg { opacity: .25; }
.qa.star { color: #ffc20e; font-size: 14px; }
.qa.window { width: auto; gap: 4px; font-size: 11px; }
.qa.window .caret { margin: 0 4px; }
.lined { position: relative; }
.lined::before { content: ""; position: absolute; left: -3px; top: -7px; width: 7px; height: 1px; background: #fff; }
.titlebar h1 { flex: 1; text-align: center; }
.tabs { display: flex; gap: 1px; height: 29px; font-size: 13px; line-height: 27px; white-space: nowrap; }
.tabs a { padding: 0 9px; height: 27px; }
.tabs .file { padding: 0 25px 0 20px; }
.tabs .wide { padding: 0 10px; }
.tabs .on { color: #ffc94f; border-bottom: 2px solid #ffc94f; }
.context { width: 58px; border-top: 4px solid #0d5674; background: #046488; text-align: center; }
.context span, .context a { display: block; }
.context span { font-size: 11px; line-height: 18px; height: 23px; }
.context a { font-size: 13px; line-height: 27px; }
.appbar-end { width: 293px; }
.appbar-end svg { fill: none; stroke: #fff; }
.winctl { display: flex; justify-content: flex-end; gap: 10px; height: 27px; padding: 0 6px 2px 0; }
.winctl svg { width: 14px; height: 14px; }
.searchrow { display: flex; align-items: center; gap: 5px; height: 28px; padding-left: 5px; }
.searchrow button { width: 16px; margin-left: 5px; }
.searchrow button svg { width: 16px; height: 16px; }
.search { display: flex; align-items: center; width: 178px; height: 22px; border: 1px solid #777; background: #fff; }
.search input { flex: 1; min-width: 0; height: 20px; padding: 0; border: 0; outline: 0; font: inherit; font-size: 11px; }
.search input::placeholder { color: #aaa; }
.search svg { width: 18px; height: 18px; stroke: #333; }

/* ribbon */
.ribbon { display: flex; height: 94px; padding-top: 5px; border-bottom: 1px solid #d8d8d8; font-size: 11px; }
.group { position: relative; height: 84px; border-right: 1px solid #d4d4d4; }
.group h2 { color: #006487; text-align: center; line-height: 14px; padding-right: 16px; }
.cmds { display: flex; height: 72px; padding: 0 3px 0 8px; }
.cmds.first { padding: 0 7px 0 10px; }
.big { flex-direction: column; justify-content: flex-start; width: 41px; white-space: nowrap; line-height: 14px; }
.big.wide { width: 50px; }
.big svg { width: 32px; height: 32px; margin-bottom: 5px; }
.big .caret { margin-top: 5px; }
.stack { display: flex; flex-direction: column; margin-left: 8px; margin-top: -1px; }
.stack button { height: 35px; gap: 4px; justify-content: flex-start; }
.stack svg { width: 24px; height: 24px; }
.big.more { margin-left: 9px; }
.tight .big { width: 40px; }
.tight .stack { margin-left: 6px; }
.launch { position: absolute; right: 8px; bottom: 4px; }
.endmark { margin-left: auto; margin-right: 6px; align-self: flex-end; }
.ribbon .endmark { margin-bottom: 7px; }

/* selection bar */
.selbar { display: flex; align-items: center; height: 28px; border-bottom: 1px solid #a0a0a0; }
.selbar .endmark { margin-bottom: 8px; }
.menu { padding-left: 12px; font-size: 11px; }
.lines { width: 11px; height: 9px; margin-right: 7px; background: linear-gradient(#333 1px, transparent 1px 4px, #333 4px 5px, transparent 5px 8px, #333 8px); }
.menu .caret { margin-left: 7px; }
.rule { width: 1px; height: 19px; background: #d4d4d4; margin: 0 12px 0 7px; }
.combo { display: grid; align-items: center; height: 22px; border: 1px solid #666; }
.combo > * { grid-area: 1 / 1; }
.combo select { appearance: none; width: 100%; height: 20px; padding: 0 2px; border: 0; background: #fff; font: inherit; font-size: 11px; color: #111; }
.combo .caret { justify-self: end; margin-right: 4px; border-width: 5px 4px 0; }
.combo.type { width: 149px; }
.combo.scope { width: 156px; }
.filter { width: 34px; }
.filter svg, .tools svg { width: 16px; height: 16px; }
.tools { display: flex; margin-left: 4px; }
.tools button { width: 25px; height: 22px; }
.tools .thin { width: 13px; margin-right: 2px; }
.tools .on { background: #cde5eb; }

/* workspace */
.workspace { display: flex; flex: 1; }
.rail { width: 37px; background: #dcdcdc; border-right: 1px solid #a0a0a0; flex: none; }
.rail button { width: 36px; height: 44px; padding-left: 3px; }
.rail svg { width: 24px; height: 24px; }
.rail .top { height: 32px; }
.rail .top svg { width: 18px; height: 18px; margin-right: 4px; }
.rail .on { width: 34px; margin-left: 3px; padding: 0; background: #fff; border: 1px solid #a0a0a0; border-right: 0; }
.panel { position: relative; width: 323px; flex: none; padding: 0 9px 8px 8px; border-right: 1px solid #a0a0a0; }
.panel-title { display: flex; align-items: center; height: 25px; gap: 3px; }
.panel-title svg { width: 16px; height: 16px; }
.panel-title button { margin-left: auto; margin-right: 2px; width: 12px; height: 11px; border: 1px solid #111; border-top-width: 2px; }
.panel-tabs { display: flex; height: 26px; font-weight: 700; font-size: 13px; line-height: 26px; border-bottom: 1px solid #ccc; margin-right: -1px; margin-left: -2px; }
.panel-tabs a { padding: 0 6px; height: 26px; white-space: nowrap; }
.panel-tabs .on { color: #00789e; border-bottom: 2px solid #00789e; }
.card { border: 1px solid #ccc; padding: 3px 8px 7px; }
.card.color { margin: 3px 0 4px; }
.card.style { margin-bottom: 8px; }
.card h3 { display: flex; align-items: center; gap: 8px; height: 16px; font-weight: 700; font-size: 13px; color: #006487; }
.field { display: flex; align-items: center; gap: 2px; height: 35px; margin-top: 5px; }
.field > span { margin-right: auto; }
.field.off { color: #aaa; margin-bottom: -2px; }
.card.color .field { margin: 4px 0 -3px; }
.swatches { display: flex; width: 100px; height: 22px; border: 1px solid #444; }
.swatches b { flex: 1; }
.swatches .teal { background: #009999; }
.swatches .red { background: #f00; }
.reset { width: 24px; height: 24px; border: 1px solid #555; background: #fff; }
.reset:disabled { border-color: #bbb; color: #bbb; }
.reset svg { width: 16px; height: 16px; }
.card ul { border: 1px solid #ccc; }
.card li { height: 21px; border-bottom: 1px solid #e2e2e2; }
.card li:nth-child(even) { background: #f9f9f9; }
.card .part { height: 6px; border: 0; }
.card label { display: flex; align-items: center; height: 20px; gap: 5px; padding-left: 3px; }
.card input { appearance: none; display: grid; place-items: center; width: 14px; height: 14px; margin: 0; border: 1px solid #333; background: #fff; }
.card input:checked::before { content: ""; width: 4px; height: 8px; margin-top: -2px; border: solid #333; border-width: 0 2px 2px 0; transform: rotate(42deg); }
.callout { position: absolute; left: 215px; top: 47px; width: 23px; height: 23px; border: 2px solid #fff; border-radius: 50%; background: #0000f5; color: #fff; text-align: center; line-height: 19px; box-shadow: 1px 1px 3px 1px #777; }

/* graphics window */
.stage { flex: 1; min-width: 0; display: flex; flex-direction: column; background: linear-gradient(#93bada 27px, #c6d6e2 54%, #e4e4e4 76%); }
.docs { height: 27px; background: #fff; border-bottom: 2px solid #006487; }
.doc { display: inline-flex; align-items: center; height: 27px; padding: 0 6px; gap: 6px; background: #006487; color: #fff; }
.docicon { width: 15px; height: 15px; }
.edit { width: 9px; height: 12px; fill: none; stroke: #fff; stroke-width: 2; }
.doc button { width: 11px; font-weight: 700; }
.view { display: block; flex: 1; width: 100%; min-height: 0; }
.cad * { vector-effect: non-scaling-stroke; }
.foot path { fill: #e6ae3a; stroke: #443312; }
.foot .fs { fill: #8a6520; }
.foot .ff { fill: #a07428; }
.edge { fill: none; stroke: #4a2a2e; }
.grid { fill: none; stroke: #3a22d8; }
.ylw { fill: #ffe100; stroke: #222; }
.ydark { fill: #c4a200; stroke: #222; }
.noline { fill: none; stroke: #222; }
.blk { fill: #050505; stroke: #111; }
.grayline { fill: none; stroke: #3c3c3c; }
.fx path { stroke: #f9a048; stroke-width: 2; stroke-linejoin: round; }
.fx > path:first-child { fill: #ffb352; }
.arm path { stroke: #f9a048; stroke-width: 5; }
.balls circle { fill: url(#ball); stroke: #ee9a45; }
.dots circle { fill: #24668a; }
.py { color: #b9b000; }
.pg { color: #00a80c; }
.axis text { font: 13px "Noto Sans", sans-serif; }
.badge circle { fill: #0000f5; stroke: #fff; stroke-width: 2; filter: drop-shadow(1px 1px 1px #666); }
.badge text { fill: #fff; font-size: 14px; text-anchor: middle; }
.note { font: 24px "Noto Sans CJK SC", sans-serif; fill: #f00; stroke: #fff; stroke-width: 6px; stroke-linejoin: round; paint-order: stroke; filter: drop-shadow(1px 1px 1px #777); }

/* status line */
.status { position: relative; display: flex; align-items: center; height: 23px; padding: 0 53px 0 3px; border-top: 1px solid #a0a0a0; border-bottom: 1px solid #b4b4b4; font-size: 11px; }
.notice { position: relative; z-index: 1; margin-left: auto; gap: 4px; }
.notice svg { width: 16px; height: 16px; }
.ime { position: absolute; right: 563px; bottom: -1px; display: flex; align-items: center; width: 201px; height: 27px; padding-left: 32px; border: 1px solid #b8cfe8; background: #fff; color: #0a6fd6; font-size: 14px; font-weight: 700; }
.ime button { width: 24px; height: 24px; }
.ime button svg { width: 16px; height: 16px; fill: #0a6fd6; }
.ime .logo { position: absolute; left: -2px; bottom: -1px; width: 32px; height: 31px; }
.credit { position: absolute; right: 5px; bottom: 6px; font: 300 37px/44px Roboto, "Noto Sans CJK SC", sans-serif; color: rgba(240, 240, 240, .75); text-shadow: 1px 1px 1px #888; pointer-events: none; white-space: nowrap; }
```
